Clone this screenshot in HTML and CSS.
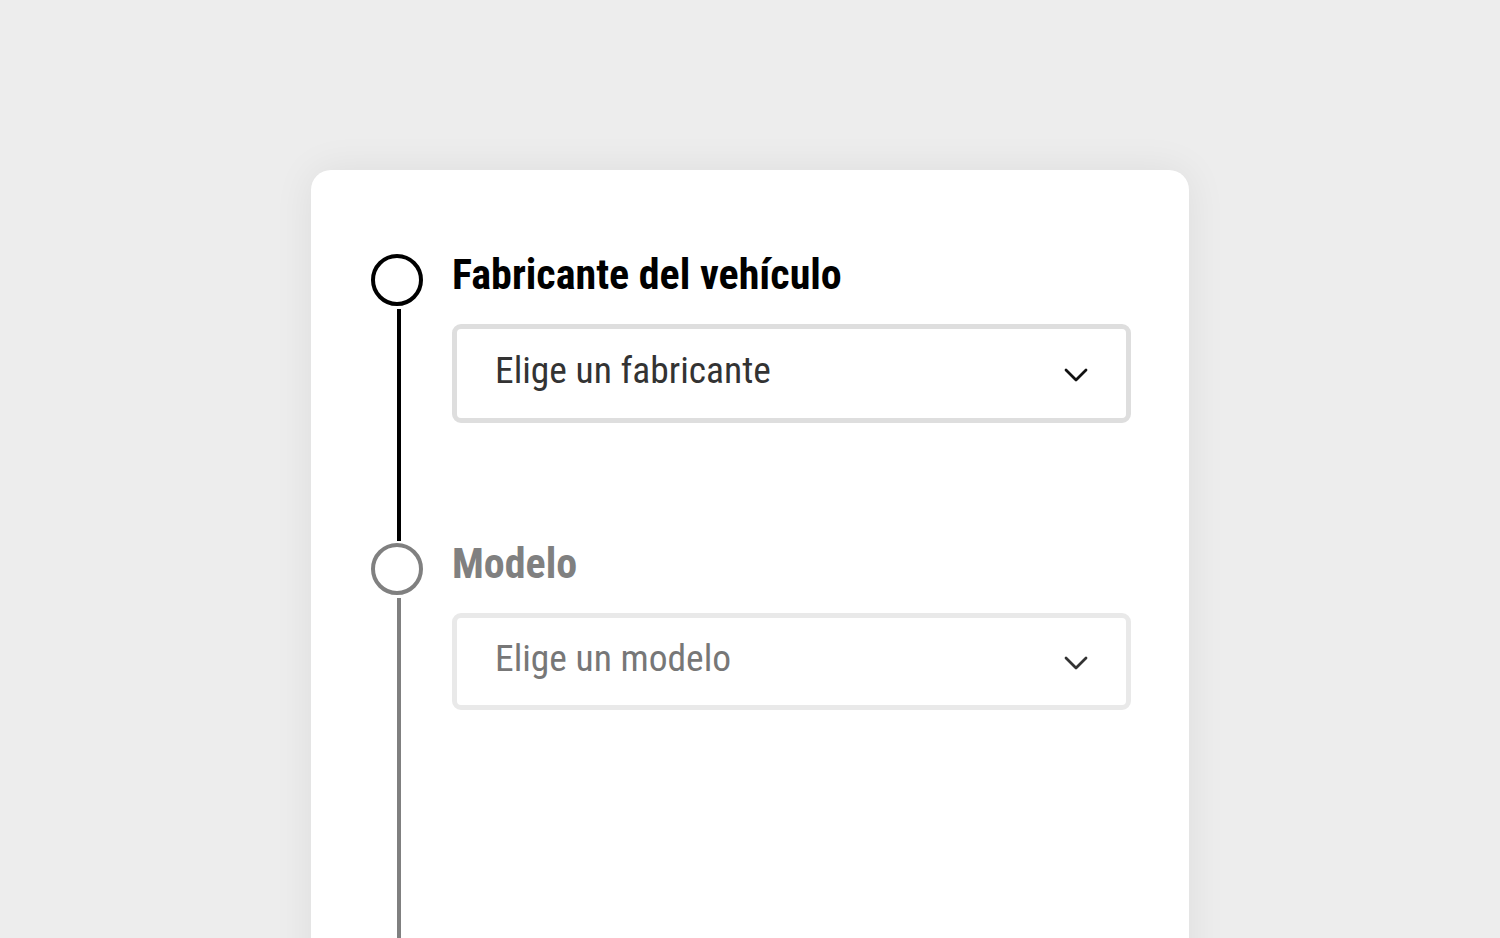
FILE: index.html
```html
<!DOCTYPE html>
<html lang="es">
<head>
<meta charset="utf-8">
<title>Vehículo</title>
<link rel="stylesheet" href="styles.css">
</head>
<body>
<main class="page">
  <section class="card">
    <div class="step step-active">
      <div class="rail">
        <span class="dot"></span>
        <span class="line"></span>
      </div>
      <div class="content">
        <h2 class="title">Fabricante del vehículo</h2>
        <div class="select">
          <span class="placeholder">Elige un fabricante</span>
          <svg class="chev" width="24" height="14" viewBox="0 0 24 14" aria-hidden="true"><path d="M2 2 L12 12 L22 2" fill="none" stroke="currentColor" stroke-width="2.8" stroke-linecap="round" stroke-linejoin="round"/></svg>
        </div>
      </div>
    </div>
    <div class="step step-idle">
      <div class="rail">
        <span class="dot"></span>
        <span class="line"></span>
      </div>
      <div class="content">
        <h2 class="title">Modelo</h2>
        <div class="select">
          <span class="placeholder">Elige un modelo</span>
          <svg class="chev" width="24" height="14" viewBox="0 0 24 14" aria-hidden="true"><path d="M2 2 L12 12 L22 2" fill="none" stroke="currentColor" stroke-width="2.8" stroke-linecap="round" stroke-linejoin="round"/></svg>
        </div>
      </div>
    </div>
  </section>
</main>
</body>
</html>
```

FILE: styles.css
```css
* { box-sizing: border-box; }
html, body {
  margin: 0;
  padding: 0;
  height: 100%;
  overflow: hidden;
}
body {
  background: #ededed;
  font-family: "Roboto Condensed", Roboto, "Liberation Sans", sans-serif;
  font-stretch: condensed;
}
.page {
  display: flex;
  justify-content: center;
  padding-top: 170px;
}
.card {
  width: 878px;
  height: 820px;
  flex-shrink: 0;
  background: #fff;
  border-radius: 20px;
  box-shadow: 0 0 40px rgba(0, 0, 0, 0.07);
  padding: 84px 58px 0 60px;
}
.step {
  display: flex;
  gap: 29px;
  height: 289px;
}
.step-idle { height: 447px; }
.rail {
  width: 52px;
  display: flex;
  flex-direction: column;
  align-items: center;
  flex-shrink: 0;
}
.dot {
  width: 52px;
  height: 52px;
  border-radius: 50%;
  border: 4px solid #000;
  flex-shrink: 0;
}
.line {
  width: 4px;
  flex: 1;
  margin: 3px 0 2px 4px;
  background: #000;
}
.step-idle .dot { border-color: #808080; }
.step-idle .line { background: #808080; margin-bottom: 0; }
.content {
  flex: 1;
}
.title {
  margin: -1px 0 27px;
  font-size: 42px;
  line-height: 44px;
  font-weight: 700;
  color: #000;
}
.step-idle .title { color: #808080; }
.select {
  height: 99px;
  border: 5px solid #dedede;
  border-radius: 9px;
  display: flex;
  align-items: center;
  justify-content: space-between;
  padding: 0 38px 0 38px;
  color: #333;
}
.step-idle .select {
  border-color: #e9e9e9;
  height: 97px;
  color: #777;
}
.placeholder {
  font-size: 37.5px;
  line-height: 44px;
  margin-top: -8px;
}
.chev {
  color: #111;
  margin-top: 2px;
}
.step-idle .chev { color: #333; }
```
